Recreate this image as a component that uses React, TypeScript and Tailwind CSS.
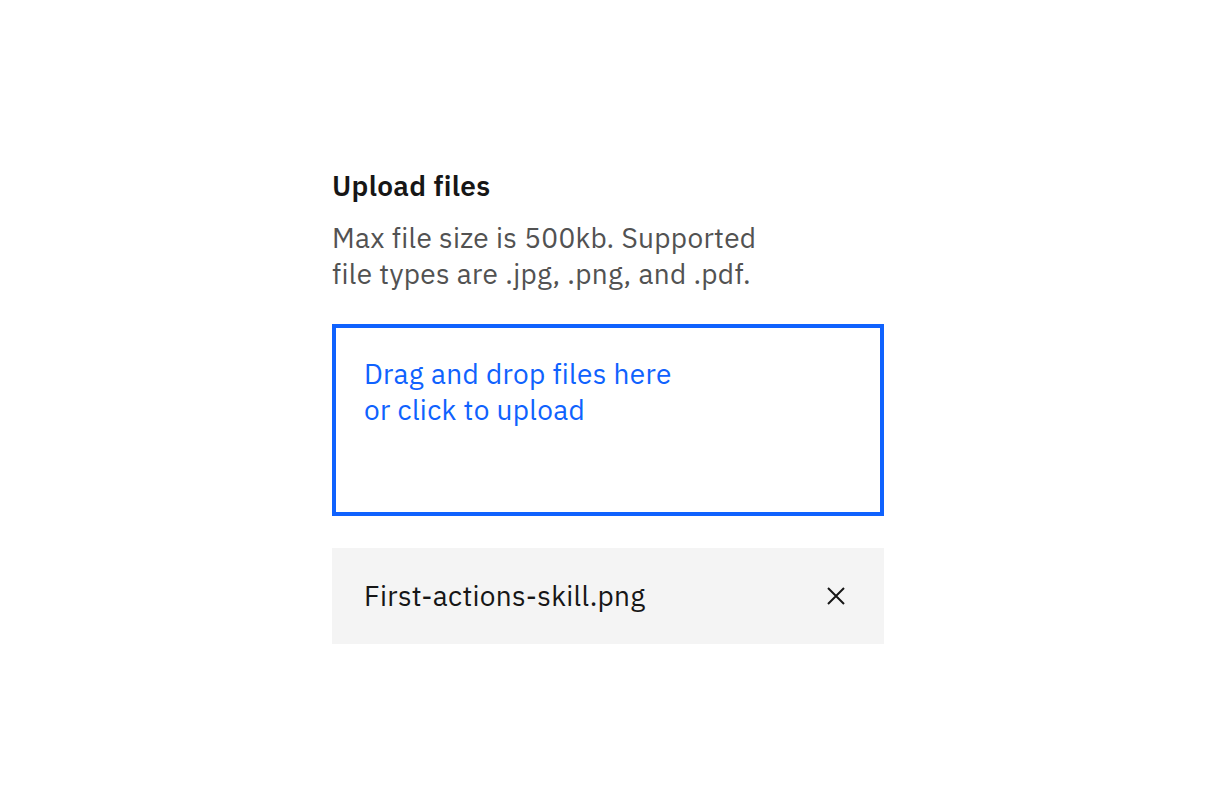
export default function App() {
  return (
    <div className="min-h-screen bg-white font-['IBM_Plex_Sans','Inter',sans-serif] tracking-[0.32px]">
      <div className="pt-[168px] pl-[332px]">
        <div className="w-[552px]">
          {/* Label + helper */}
          <h2 className="text-[28px] leading-[36px] font-semibold text-[#161616]">Upload files</h2>
          <p className="mt-4 text-[28px] leading-[36px] text-[#525252]">
            Max file size is 500kb. Supported
            <br />
            file types are .jpg, .png, and .pdf.
          </p>

          {/* Drop zone */}
          <button
            type="button"
            className="mt-8 flex w-full h-[192px] items-start border-4 border-[#0f62fe] bg-white p-7 text-left tracking-[0.32px]"
          >
            <span className="text-[28px] leading-[36px] text-[#0f62fe]">
              Drag and drop files here
              <br />
              or click to upload
            </span>
          </button>

          {/* File item */}
          <div className="mt-8 flex h-[96px] items-center justify-between bg-[#f4f4f4] pl-8 pr-8">
            <span className="text-[28px] leading-[36px] text-[#161616]">First-actions-skill.png</span>
            <button type="button" className="flex h-8 w-8 items-center justify-center">
              <svg width="32" height="32" viewBox="0 0 32 32" fill="none" stroke="#161616" strokeWidth="2">
                <path d="M8 8L24 24M24 8L8 24" />
              </svg>
            </button>
          </div>
        </div>
      </div>
    </div>
  )
}
